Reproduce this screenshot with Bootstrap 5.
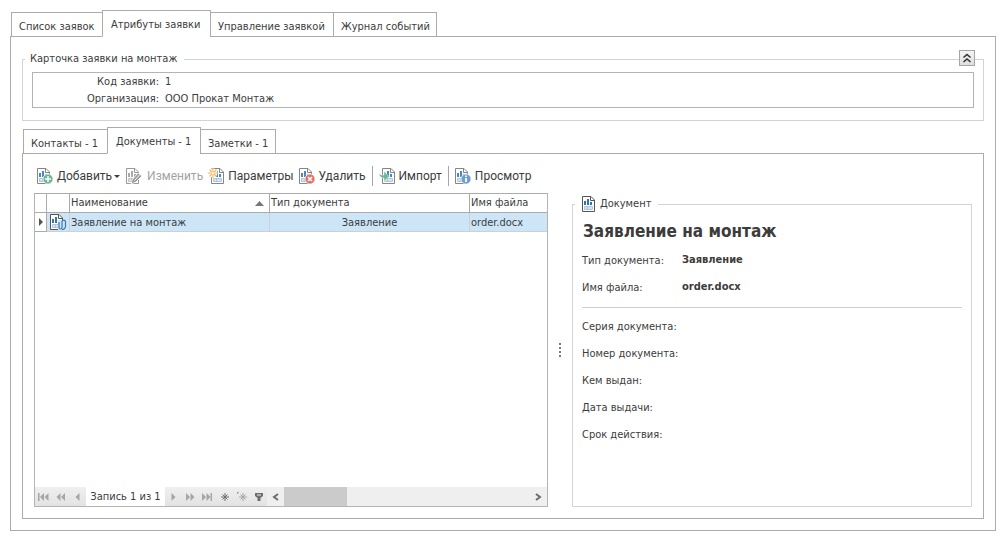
<!DOCTYPE html>
<html lang="ru">
<head>
<meta charset="utf-8">
<meta name="viewport" content="width=device-width, initial-scale=1">
<title>Атрибуты заявки</title>
<link rel="stylesheet" href="https://cdn.jsdelivr.net/npm/bootstrap@5.3.0/dist/css/bootstrap.min.css">
<style>
  :root { --edge: #ababab; --soft: #d3d3d3; --ink: #3c3c3c; }
  body { font-family: "DejaVu Sans Condensed", "DejaVu Sans", sans-serif; font-size: 11px; line-height: 16px; color: var(--ink); background: #fff; padding: 10px; }
  button, .btn { font-size: inherit; color: inherit; }
  .app-tabs { --bs-nav-tabs-border-width: 0; border: 0; padding-left: 1px; align-items: flex-end; position: relative; z-index: 1; margin-bottom: -1px; }
  .app-tabs .nav-link { border: 1px solid var(--edge); border-radius: 0; color: var(--ink); font-size: 11px; line-height: 16px; padding: 6px 0 2px 7px; margin: 0 -1px 0 0; height: 25px; white-space: nowrap; }
  .app-tabs .nav-link:hover { border-color: var(--edge); }
  .app-tabs .nav-link.active { height: 27px; color: var(--ink); padding: 6px 0 4px 8px; border-color: var(--edge); border-bottom-color: #fff; }
  .app-tabs .w1 { width: 92px; } .app-tabs .w2 { width: 109px; } .app-tabs .w3 { width: 124px; } .app-tabs .w4 { width: 104px; }
  .app-tabs .v1 { width: 85px; } .app-tabs .v2 { width: 94px; } .app-tabs .v3 { width: 76px; }
  .inner-tabs { margin-top: 6px; }
  .pane { border: 1px solid var(--edge); padding: 11px; }
  .group-box { border: 1px solid var(--soft); padding: 0 9px; margin-top: 3px; }
  .group-box > legend { float: none; width: auto; font-size: 11px; line-height: 16px; margin: 0 0 0 -7px; padding: 0 7px 0 5px; }
  .legend-icon { margin: 0 4px 0 2px; }
  .collapse-btn { right: 8px; top: -17px; width: 16px; height: 16px; padding: 0; border: 1px solid #a5a5a5; background: linear-gradient(#f4f4f4, #dedede); line-height: 0; }
  .info-box { border: 1px solid #b4b4b4; padding: 0 4px; margin: 5px 0 12px; }
  .info-box dl { grid-template-columns: 122px 1fr; column-gap: 6px; line-height: 17px; }
  .info-box dt { font-weight: 400; text-align: right; }
  .info-box dd { margin: 0; }
  .tool-bar { font-family: Roboto, "Noto Sans", sans-serif; gap: 5px; margin: 1px 0 7px 3px; }
  .tool-bar .btn { font-family: inherit; font-size: 12px; line-height: 20px; padding: 0; border: 0; border-radius: 0; display: flex; align-items: center; gap: 4px; color: var(--ink); }
  .tool-bar .btn:disabled { color: #a3a3a3; opacity: 1; }
  .tool-bar .dropdown-toggle::after { margin: 0 1px 0 -2px; border-width: 3px 3px 0; }
  .tool-bar .vr { width: 1px; background: #a5a5a5; opacity: 1; height: 20px; margin: 0 1px; }
  .grid-box { border: 1px solid #b4b4b4; border-top: 1px solid var(--edge); flex: 0 0 514px; }
  .data-grid { table-layout: fixed; width: 100%; border-collapse: separate; border-spacing: 0; margin: 0; white-space: nowrap; }
  .data-grid th { font-weight: 400; border-right: 1px solid var(--edge); border-bottom: 1px solid var(--edge); height: 19px; line-height: 18px; padding: 0 1px; }
  .data-grid td { background: #cde6f7; border-right: 1px solid #cccfd4; border-bottom: 1px solid #d0d0d0; height: 19px; line-height: 17px; padding: 0 1px; }
  .data-grid tr > :last-child { border-right: 0; }
  .data-grid td.row-mark { background: #fff; border-color: var(--edge); }
  .data-grid svg { display: block; }
  .nav-bar { background: linear-gradient(#efefef, #e3e3e3); height: 19px; }
  .nav-bar button { border: 0; padding: 0; background: none; width: 17px; height: 19px; line-height: 0; color: #a6a6a6; display: flex; align-items: center; justify-content: center; }
  .nav-bar .strong-btn { color: #6e6e6e; }
  .rec-label { background: #fff; width: 79px; line-height: 20px; text-align: center; }
  .scroll-track { background: #efefef; }
  .scroll-thumb { background: #cbcbcb; width: 63px; }
  .splitter { width: 24px; }
  .doc-title { font-size: 17px; line-height: 24px; font-weight: 700; margin: 7px 0 4px 1px; }
  .doc-list { grid-template-columns: 100px 1fr; grid-auto-rows: 27px; line-height: 27px; margin: 0; }
  .doc-list dt { font-weight: 400; white-space: nowrap; }
  .doc-list dd { margin: 0; font-weight: 700; line-height: 25px; }
  .doc-rule { border-top: 1px solid #cfcfcf; opacity: 1; margin: 6px 0 5px; }
</style>
</head>
<body class="vh-100 d-flex flex-column">
<svg width="0" height="0" class="position-absolute" aria-hidden="true">
  <symbol id="page" viewBox="0 0 16 16">
    <path d="M.5.5h8.500l3.500 3.500v11.500H.5z" fill="#fff" stroke="currentColor"/>
    <path d="M8.500.5v4h4" fill="none" stroke="currentColor"/>
    <path d="M2 5h2v4H2zM5 3h2v6H5zM8 6h2v3H8z" fill="var(--bar, #4a86c0)"/>
    <path d="M2.500 10.500h8v3h-8zM2.500 12h8M5.500 10.500v3" fill="none" stroke="var(--line, #a9c0da)" stroke-width=".9"/>
  </symbol>
</svg>

<ul class="nav nav-tabs app-tabs">
  <li class="nav-item"><a class="nav-link w1" href="#">Список заявок</a></li>
  <li class="nav-item"><a class="nav-link active w2" href="#" aria-current="page">Атрибуты заявки</a></li>
  <li class="nav-item"><a class="nav-link w3" href="#">Управление заявкой</a></li>
  <li class="nav-item"><a class="nav-link w4" href="#">Журнал событий</a></li>
</ul>

<main class="pane flex-grow-1 d-flex flex-column">
  <fieldset class="group-box position-relative">
    <legend>Карточка заявки на монтаж</legend>
    <button type="button" class="collapse-btn position-absolute" aria-label="Свернуть">
      <svg width="14" height="14" viewBox="0 0 14 14" fill="none" stroke="#333" stroke-width="1.6"><path d="M3.5 6.5 7 3.5l3.500 3M3.500 11 7 8l3.500 3"/></svg>
    </button>
    <div class="info-box">
      <dl class="d-grid mb-0">
        <dt>Код заявки:</dt><dd>1</dd>
        <dt>Организация:</dt><dd>ООО Прокат Монтаж</dd>
      </dl>
    </div>
  </fieldset>

  <ul class="nav nav-tabs app-tabs inner-tabs">
    <li class="nav-item"><a class="nav-link v1" href="#">Контакты - 1</a></li>
    <li class="nav-item"><a class="nav-link active v2" href="#" aria-current="page">Документы - 1</a></li>
    <li class="nav-item"><a class="nav-link v3" href="#">Заметки - 1</a></li>
  </ul>

  <section class="pane flex-grow-1 d-flex flex-column">
    <div class="tool-bar d-flex align-items-center" role="toolbar">
      <button type="button" class="btn dropdown-toggle">
        <svg width="16" height="16" color="#858585"><use href="#page"/><circle cx="11" cy="11" r="5" fill="#6db795" stroke="#fff" stroke-width=".7"/><path d="M11 8v6M8 11h6" stroke="#fff" stroke-width="1.500"/></svg>Добавить</button>
      <button type="button" class="btn" disabled>
        <svg width="17" height="16" color="#999" style="--bar:#aaa;--line:#bbb"><use href="#page" width="16"/><path d="M6 12l6-7 4 3-6 6-5 2z" fill="#999" stroke="#fff" stroke-width=".8"/><path d="M8.500 12.500l5-5.500" stroke="#fff"/></svg>Изменить</button>
      <button type="button" class="btn">
        <svg width="16" height="16" color="#858585"><use href="#page" x="3"/><circle cx="5" cy="5" r="4.500" fill="#fff"/><path d="M5 0v10M0 5h10M1.500 1.500l7 7M8.500 1.500l-7 7" stroke="#edb65f" stroke-width="1.100"/><circle cx="5" cy="5" r="1.500" fill="#fff0cc"/></svg>Параметры</button>
      <button type="button" class="btn">
        <svg width="16" height="16" color="#858585"><use href="#page"/><circle cx="11" cy="11" r="5" fill="#df7268" stroke="#fff" stroke-width=".7"/><path d="M9 9l4 4M13 9l-4 4" stroke="#fff" stroke-width="1.600"/></svg>Удалить</button>
      <span class="vr"></span>
      <button type="button" class="btn">
        <svg width="16" height="16" color="#858585"><use href="#page" x="3"/><path d="M0 5c1 2 2 2 5 2V3l5 5.500-5 5V10C2 10 0 8 0 5z" fill="#6db795" stroke="#fff" stroke-width=".5"/></svg>Импорт</button>
      <span class="vr"></span>
      <button type="button" class="btn">
        <svg width="16" height="16" color="#858585"><use href="#page"/><circle cx="11" cy="11" r="5" fill="#6e9ccb" stroke="#fff" stroke-width=".7"/><path d="M11 7.500v1.500M11 10v4" stroke="#fff" stroke-width="1.800"/></svg>Просмотр</button>
    </div>

    <div class="d-flex flex-grow-1">
      <div class="grid-box d-flex flex-column">
        <table class="data-grid">
          <colgroup><col style="width:12px"><col style="width:23px"><col style="width:200px"><col style="width:200px"><col></colgroup>
          <thead><tr>
            <th></th><th></th>
            <th><span class="d-flex justify-content-between align-items-center">Наименование<svg class="me-1" width="9" height="5"><path d="M0 5 4.500 0 9 5z" fill="#777"/></svg></span></th>
            <th>Тип документа</th><th>Имя файла</th>
          </tr></thead>
          <tbody><tr>
            <td class="row-mark"><svg width="10" height="8"><path d="M3 0l4 4-4 4z" fill="#555"/></svg></td>
            <td><svg class="mx-auto" width="18" height="16" color="#555" style="--bar:#2e75b5"><use href="#page" x="1" width="16"/><path d="M9 6h8v10H9z" fill="#cde6f7"/><path d="M10 8v5.500a1.500 1.500 0 0 0 3 0V7.500a1.800 1.800 0 0 1 3.500 0v5a3.400 3.400 0 0 1-3.500 3" fill="none" stroke="#3a78b5" stroke-width="1.200"/></svg></td>
            <td>Заявление на монтаж</td><td class="text-center">Заявление</td><td>order.docx</td>
          </tr></tbody>
        </table>
        <div class="nav-bar d-flex mt-auto">
          <button type="button" aria-label="Первая"><svg width="11" height="8" fill="currentColor"><path d="M0 0h1.500v8H0zM6 0v8L2 4zM10.500 0v8l-4-4z"/></svg></button>
          <button type="button" aria-label="Предыдущая страница"><svg width="9" height="8" fill="currentColor"><path d="M4.500 0v8l-4-4zM9 0v8L5 4z"/></svg></button>
          <button type="button" aria-label="Предыдущая"><svg width="5" height="8" fill="currentColor"><path d="M4.500 0v8l-4-4z"/></svg></button>
          <span class="rec-label">Запись 1 из 1</span>
          <button type="button" aria-label="Следующая"><svg width="5" height="8" fill="currentColor"><path d="M.5 0v8l4-4z"/></svg></button>
          <button type="button" aria-label="Следующая страница"><svg width="9" height="8" fill="currentColor"><path d="M0 0v8l4-4zM4.500 0v8l4-4z"/></svg></button>
          <button type="button" aria-label="Последняя"><svg width="11" height="8" fill="currentColor"><path d="M0 0v8l4-4zM4.500 0v8l4-4zM8.500 0H10v8H8.500z"/></svg></button>
          <button type="button" class="strong-btn" aria-label="Добавить запись"><svg width="8" height="8" stroke="currentColor"><path d="M4 0v8M0 4h8M1.500 1.500l5 5M6.500 1.500l-5 5"/></svg></button>
          <button type="button" aria-label="Копировать запись"><svg width="10" height="9" stroke="currentColor"><path d="M6 1v8M2 5h8M3.500 2.500l5 5M8.500 2.500l-5 5M.5 0v2M0 .5h2"/></svg></button>
          <button type="button" class="strong-btn" aria-label="Фильтр"><svg width="8" height="8"><path d="M0 0h8v3L5.500 5v3h-3V5L0 3z" fill="currentColor"/><path d="M2 2h4" stroke="#eee"/></svg></button>
          <div class="scroll-track d-flex flex-grow-1">
            <button type="button" class="strong-btn" aria-label="Влево"><svg width="7" height="8" fill="none" stroke="currentColor" stroke-width="2"><path d="M6 1 2 4l4 3"/></svg></button>
            <div class="scroll-thumb"></div>
            <button type="button" class="strong-btn ms-auto" aria-label="Вправо"><svg width="7" height="8" fill="none" stroke="currentColor" stroke-width="2"><path d="M1 1l4 3-4 3"/></svg></button>
          </div>
        </div>
      </div>

      <div class="splitter d-flex justify-content-center align-items-center"><svg width="2" height="14" fill="#777"><path d="M0 0h2v2H0zM0 4h2v2H0zM0 8h2v2H0zM0 12h2v2H0z"/></svg></div>

      <fieldset class="group-box flex-grow-1">
        <legend><svg class="legend-icon" width="14" height="16" color="#555" style="--bar:#2e75b5"><use href="#page" width="16" height="16"/></svg>Документ</legend>
        <h1 class="doc-title">Заявление на монтаж</h1>
        <dl class="doc-list d-grid">
          <dt>Тип документа:</dt><dd>Заявление</dd>
          <dt>Имя файла:</dt><dd>order.docx</dd>
        </dl>
        <hr class="doc-rule">
        <dl class="doc-list d-grid">
          <dt>Серия документа:</dt><dd></dd>
          <dt>Номер документа:</dt><dd></dd>
          <dt>Кем выдан:</dt><dd></dd>
          <dt>Дата выдачи:</dt><dd></dd>
          <dt>Срок действия:</dt><dd></dd>
        </dl>
      </fieldset>
    </div>
  </section>
</main>
<script src="https://cdn.jsdelivr.net/npm/bootstrap@5.3.0/dist/js/bootstrap.bundle.min.js"></script>
</body>
</html>
